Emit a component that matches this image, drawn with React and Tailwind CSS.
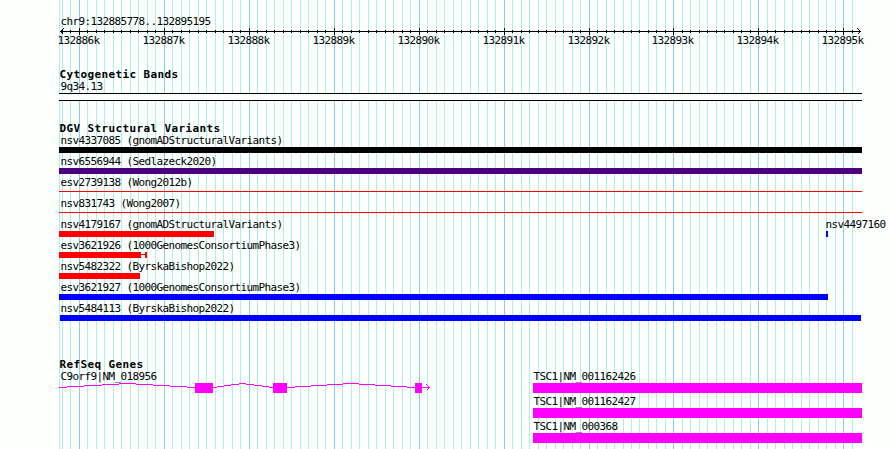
import React from 'react';

// --- SCALE ---

const TRACK_WIDTH = 803;
const TICK_ORIGIN = 20.45;
const TICK_STEP = 8.493;

const ticks = Array.from({ length: 94 }, (_, i) => {
  const n = i - 2;
  return { x: Math.floor(TICK_ORIGIN + n * TICK_STEP), major: n % 10 === 0, k: 132886 + n / 10 };
});

// --- TRACK DATA ---

const variants = [
  { name: 'nsv4337085 (gnomADStructuralVariants)', start: 0, width: 803, color: 'bg-black' },
  { name: 'nsv6556944 (Sedlazeck2020)', start: 0, width: 803, color: 'bg-[#4b0082]' },
  { name: 'esv2739138 (Wong2012b)', start: 0, width: 803, color: 'bg-[#ff0000]', thin: true },
  { name: 'nsv831743 (Wong2007)', start: 0, width: 803, color: 'bg-[#ff0000]', thin: true },
  { name: 'nsv4179167 (gnomADStructuralVariants)', start: 0, width: 155, color: 'bg-[#ff0000]', extra: true },
  { name: 'esv3621926 (1000GenomesConsortiumPhase3)', start: 0, width: 82, color: 'bg-[#ff0000]', whisker: true },
  { name: 'nsv5482322 (ByrskaBishop2022)', start: 0, width: 81, color: 'bg-[#ff0000]' },
  { name: 'esv3621927 (1000GenomesConsortiumPhase3)', start: 0, width: 769, color: 'bg-[#0000ff]' },
  { name: 'nsv5484113 (ByrskaBishop2022)', start: 1, width: 801, color: 'bg-[#0000ff]' },
];

const transcripts = ['TSC1|NM_001162426', 'TSC1|NM_001162427', 'TSC1|NM_000368'];

// --- HELPER COMPONENTS ---

const Label = ({ children }) => (
  <div className="h-3 whitespace-pre pl-[1.4px] text-[11px] leading-3 tracking-[-0.622px]">{children}</div>
);

const Heading = ({ children }) => (
  <h2 className="h-3 whitespace-pre pl-[0.4px] text-[11px] font-bold leading-3 tracking-[0.378px]">{children}</h2>
);

const Grid = () => (
  <svg className="absolute left-[59px] top-0" width={TRACK_WIDTH} height="449" shapeRendering="crispEdges">
    <rect x="0" y="0" width="1" height="449" fill="#afeeee" />
    {ticks.map((t) => (
      <rect key={t.x} x={t.x} y="0" width="1" height="449" fill={t.major ? '#87ceeb' : '#afeeee'} />
    ))}
  </svg>
);

const Ruler = () => (
  <svg className="block overflow-visible" width={TRACK_WIDTH} height="20" shapeRendering="crispEdges">
    <rect x="1" y="3" width="801" height="1" />
    <path d="M4.5 0.5L1.5 3.5L4.5 6.5M798.5 0.5L801.5 3.5L798.5 6.5" fill="none" stroke="#000" />
    {ticks.map((t) => (
      <rect key={t.x} x={t.x} y={t.major ? 0 : 2} width="1" height={t.major ? 7 : 3} />
    ))}
    {ticks.filter((t) => t.major).map((t) => (
      <text key={t.x} x={t.x - 21.6} y="16" className="text-[11px] tracking-[-0.622px]">{`${t.k}k`}</text>
    ))}
  </svg>
);

const Variant = ({ item }) => (
  <div className="relative h-[21px]">
    <Label>{item.name}</Label>
    <div className="flex h-[6px] items-center">
      <div
        className={`${item.thin ? 'mb-px h-px' : 'h-full'} ${item.color}`}
        style={{ width: item.width, marginLeft: item.start }}
      />
      {item.whisker && (
        <>
          <div className="mb-px h-px w-1 bg-[#ff0000]" />
          <div className="h-full w-[2px] bg-[#ff0000]" />
        </>
      )}
    </div>
    {item.extra && (
      <div className="absolute left-[765px] top-0">
        <Label>nsv4497160</Label>
        <div className="ml-[2px] h-[6px] w-[2px] bg-[#0000ff]" />
      </div>
    )}
  </div>
);

const GeneModel = () => (
  <svg className="block" width="372" height="10" shapeRendering="crispEdges">
    <path
      d="M0 4.5L68.5 0.5L136 4.5M154 4.5L183.5 0.5L214 4.5M228 4.5L292 0.5L356 4.5M363 4.5H371M367.5 1.5L370.5 4.5L367.5 7.5"
      fill="none"
      stroke="#ff00ff"
    />
    <g fill="#ff00ff">
      <rect x="136" y="0" width="18" height="10" />
      <rect x="214" y="0" width="14" height="10" />
      <rect x="356" y="0" width="7" height="10" />
    </g>
  </svg>
);

const App = () => (
  <div className="relative h-[449px] w-[890px] overflow-hidden bg-[#fdfffc] font-['DejaVu_Sans_Mono',monospace] text-black">
    <Grid />
    <main className="relative ml-[59px] w-[803px] pt-4">
      <Label>chr9:132885778..132895195</Label>
      <Ruler />

      <section className="pt-[21px]">
        <Heading>Cytogenetic Bands</Heading>
        <Label>9q34.13</Label>
        <div className="h-2 border-y border-black bg-[#fdfffc]" />
      </section>

      <section className="pt-[22px]">
        <Heading>DGV Structural Variants</Heading>
        {variants.map((v) => <Variant key={v.name} item={v} />)}
      </section>

      <section className="pt-[35px]">
        <Heading>RefSeq Genes</Heading>
        <div className="flex">
          <div className="w-[474px]">
            <Label>C9orf9|NM_018956</Label>
            <GeneModel />
          </div>
          <div className="flex-1">
            {transcripts.map((name) => (
              <div key={name} className="-ml-px h-[25px]">
                <Label>{name}</Label>
                <div className="ml-px h-[10px] bg-[#ff00ff]" />
              </div>
            ))}
          </div>
        </div>
      </section>
    </main>
  </div>
);

export default App;
